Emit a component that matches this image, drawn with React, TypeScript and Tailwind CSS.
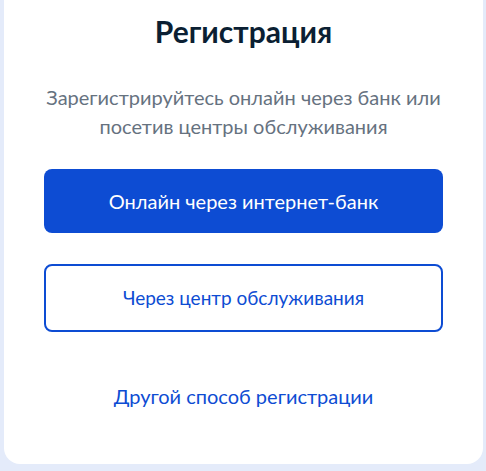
export default function App() {
  return (
    <div className="min-h-[471px] w-full bg-[#e4ebfa] pl-[4px] pr-[3px]" style={{ fontFamily: "Lato, 'Noto Sans', sans-serif" }}>
      <div className="bg-white rounded-b-[16px] px-[40px] pt-[13px] pb-[56px] flex flex-col items-center">
        <h1 className="text-[30px] leading-[36px] font-bold text-[#0b1f33] text-center">Регистрация</h1>
        <p className="mt-[34px] text-[20px] leading-[29px] text-[#66727f] text-center">
          Зарегистрируйтесь онлайн через банк или<br />посетив центры обслуживания
        </p>
        <button className="mt-[28px] w-full h-[64px] rounded-[8px] bg-[#0d4cd3] text-white text-[20px]">
          Онлайн через интернет-банк
        </button>
        <button className="mt-[31px] w-full h-[68px] rounded-[8px] border-2 border-[#0d4cd3] bg-white text-[#0d4cd3] text-[19px]">
          Через центр обслуживания
        </button>
        <a className="mt-[52px] text-[20px] leading-[24px] text-[#0d4cd3]">Другой способ регистрации</a>
      </div>
    </div>
  );
}
